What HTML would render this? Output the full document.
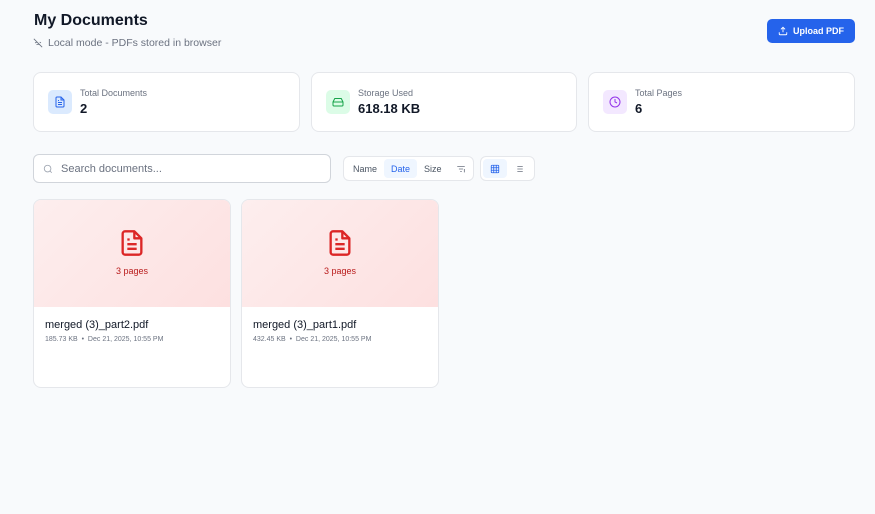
<!DOCTYPE html>
<html><head><meta charset="utf-8"><style>
*{box-sizing:border-box;margin:0;padding:0}
body{width:875px;height:514px;background:#f8fafc;font-family:"Liberation Sans",sans-serif;color:#111827;position:relative;overflow:hidden}
.abs{position:absolute}
h1{position:absolute;left:34px;top:12px;font-size:16px;font-weight:bold}
.sub{left:33px;top:37px;font-size:10.5px;color:#6b7280;display:flex;align-items:center;gap:5px}
.btn{left:767px;top:19px;width:88px;height:24px;background:#2563eb;border-radius:5px;color:#fff;font-size:9px;font-weight:bold;display:flex;align-items:center;justify-content:center;gap:5px}
.card{background:#fff;border:1px solid #e5e7eb;border-radius:8px}
.stat{top:72px;height:60px;display:flex;align-items:center;padding-left:14px}
.ic{width:24px;height:24px;border-radius:5px;display:flex;align-items:center;justify-content:center;margin-right:8px}
.lbl{font-size:9px;color:#6b7280}
.val{font-size:13px;font-weight:bold;margin-top:3px}
.search{left:33px;top:154px;width:298px;height:29px;background:#fff;border:1px solid #d1d5db;border-radius:6px;font-size:11px;color:#6b7280;display:flex;align-items:center;padding-left:9px;gap:8px}
.grp{top:156px;height:25px;background:#fff;border:1px solid #e5e7eb;border-radius:6px;display:flex;align-items:center;padding:2px;font-size:9px;color:#4b5563}
.grp span{height:19px;display:flex;align-items:center;padding:0 7px;border-radius:4px}
.doc{top:199px;width:198px;height:189px;overflow:hidden}
.prev{height:107px;background:linear-gradient(135deg,#fdeeee,#fde0e0);display:flex;flex-direction:column;align-items:center;justify-content:center;gap:8px;color:#b91c1c;font-size:9px;padding-bottom:4px}
.name{font-size:11px;margin:12px 0 0 11px}
.meta{font-size:7px;color:#6b7280;margin:5px 0 0 11px}
</style></head><body>
<h1>My Documents</h1>
<div class="abs sub"><svg width="10" height="10" viewBox="0 0 24 24" fill="none" stroke="#6b7280" stroke-width="2"><path d="M2 2l20 20M5 12a10 10 0 0 1 4-2M12 20h.01M8.5 16.5a5 5 0 0 1 7 0M16 10a10 10 0 0 1 3 2"/></svg>Local mode - PDFs stored in browser</div>
<div class="abs btn"><svg width="10" height="10" viewBox="0 0 24 24" fill="none" stroke="#fff" stroke-width="2.2"><path d="M21 15v4a2 2 0 0 1-2 2H5a2 2 0 0 1-2-2v-4M17 8l-5-5-5 5M12 3v12"/></svg>Upload PDF</div>

<div class="abs card stat" style="left:33px;width:267px"><div class="ic" style="background:#dbeafe"><svg width="12" height="12" viewBox="0 0 24 24" fill="none" stroke="#2563eb" stroke-width="2"><path d="M14 2H6a2 2 0 0 0-2 2v16a2 2 0 0 0 2 2h12a2 2 0 0 0 2-2V8zM14 2v6h6M8 13h8M8 17h8M8 9h2"/></svg></div><div><div class="lbl">Total Documents</div><div class="val">2</div></div></div>
<div class="abs card stat" style="left:311px;width:266px"><div class="ic" style="background:#dcfce7"><svg width="12" height="12" viewBox="0 0 24 24" fill="none" stroke="#16a34a" stroke-width="2"><path d="M22 12H2M5.5 5h13L22 12v6a2 2 0 0 1-2 2H4a2 2 0 0 1-2-2v-6zM6 16h.01M10 16h.01"/></svg></div><div><div class="lbl">Storage Used</div><div class="val">618.18 KB</div></div></div>
<div class="abs card stat" style="left:588px;width:267px"><div class="ic" style="background:#f3e8ff"><svg width="12" height="12" viewBox="0 0 24 24" fill="none" stroke="#9333ea" stroke-width="2"><circle cx="12" cy="12" r="10"/><path d="M12 6v6l4 2"/></svg></div><div><div class="lbl">Total Pages</div><div class="val">6</div></div></div>

<div class="abs search"><svg width="10" height="10" viewBox="0 0 24 24" fill="none" stroke="#9ca3af" stroke-width="2"><circle cx="11" cy="11" r="8"/><path d="M21 21l-4.3-4.3"/></svg>Search documents...</div>
<div class="abs grp" style="left:343px;width:131px"><span>Name</span><span style="background:#eff6ff;color:#2563eb">Date</span><span>Size</span><span><svg width="10" height="10" viewBox="0 0 24 24" fill="none" stroke="#6b7280" stroke-width="2"><path d="M3 6h18M7 12h10M10 18h4M20 12v8"/></svg></span></div>
<div class="abs grp" style="left:480px;width:55px"><span style="background:#eff6ff"><svg width="10" height="10" viewBox="0 0 24 24" fill="none" stroke="#2563eb" stroke-width="2"><rect x="3" y="3" width="18" height="18" rx="2"/><path d="M3 9h18M3 15h18M9 3v18M15 3v18"/></svg></span><span><svg width="10" height="10" viewBox="0 0 24 24" fill="none" stroke="#6b7280" stroke-width="2"><path d="M8 6h13M8 12h13M8 18h13M3 6h.01M3 12h.01M3 18h.01"/></svg></span></div>

<div class="abs card doc" style="left:33px"><div class="prev"><svg width="28" height="30" viewBox="0 0 24 24" fill="none" stroke="#dc2626" stroke-width="2" stroke-linejoin="round"><path d="M14 2H6a2 2 0 0 0-2 2v16a2 2 0 0 0 2 2h12a2 2 0 0 0 2-2V8zM14 2v6h6M8 13h8M8 17h8M8 9h2"/></svg>3 pages</div><div class="name">merged (3)_part2.pdf</div><div class="meta">185.73 KB &nbsp;•&nbsp; Dec 21, 2025, 10:55 PM</div></div>
<div class="abs card doc" style="left:241px"><div class="prev"><svg width="28" height="30" viewBox="0 0 24 24" fill="none" stroke="#dc2626" stroke-width="2" stroke-linejoin="round"><path d="M14 2H6a2 2 0 0 0-2 2v16a2 2 0 0 0 2 2h12a2 2 0 0 0 2-2V8zM14 2v6h6M8 13h8M8 17h8M8 9h2"/></svg>3 pages</div><div class="name">merged (3)_part1.pdf</div><div class="meta">432.45 KB &nbsp;•&nbsp; Dec 21, 2025, 10:55 PM</div></div>
</body></html>
